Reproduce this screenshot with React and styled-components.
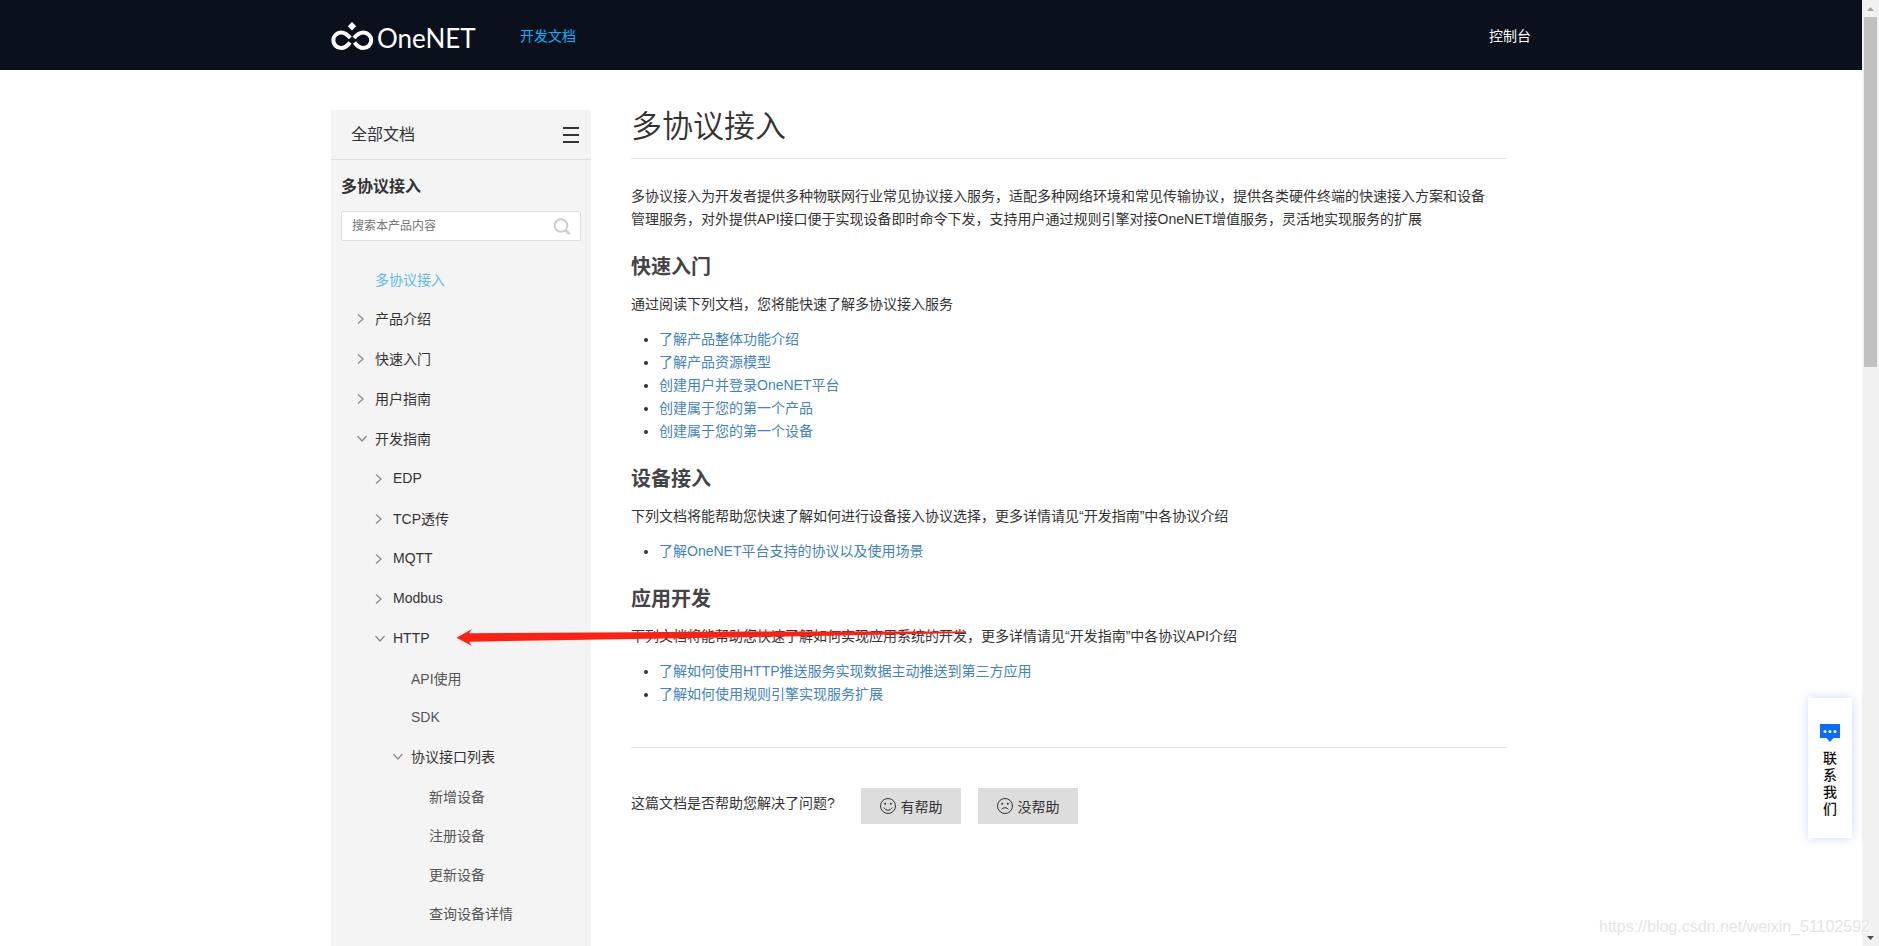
import React, { useState } from 'react';
import styled, { createGlobalStyle } from 'styled-components';

const GlobalStyle = createGlobalStyle`
  * {
    box-sizing: border-box;
  }
  body {
    margin: 0;
    background: #fff;
    color: #333;
    font-family: "Liberation Sans", "Noto Sans CJK SC", sans-serif;
    font-size: 14px;
  }
  a {
    text-decoration: none;
  }
  button, input {
    font-family: inherit;
  }
`;

const Page = styled.div`
  display: flex;
  position: relative;
  height: 100vh;
  overflow: hidden;
`;

const Main = styled.div`
  flex: 1;
  min-width: 0;
  overflow: hidden;
`;

const Container = styled.div`
  position: relative;
  display: flex;
  width: 100%;
  max-width: 1200px;
  margin: 0 auto;
`;

/* header */
const Header = styled.header`
  background: #0a111c;
`;

const HeaderInner = styled(Container)`
  align-items: center;
  height: 70px;
  padding-top: 2px;
`;

const Logo = styled.a`
  display: flex;
  align-items: center;
  gap: 3px;
  width: 189px;
  color: #fff;
`;

const LogoText = styled.span`
  padding-top: 4px;
  font-family: Lato, sans-serif;
  font-size: 26px;
  line-height: 32px;
`;

const NavLink = styled.a`
  color: ${(props) => (props.$active ? '#00b4ff' : '#fff')};
  line-height: 20px;
  margin-left: ${(props) => (props.$end ? 'auto' : '0')};
`;

/* sidebar */
const Body = styled(Container)`
  padding-top: 40px;
  gap: 40px;
  align-items: flex-start;
`;

const Sidebar = styled.aside`
  flex: 0 0 260px;
  min-height: 100vh;
  background: #f4f4f4;
`;

const SidebarTop = styled.div`
  display: flex;
  align-items: center;
  justify-content: space-between;
  height: 50px;
  padding: 0 12px 0 20px;
  border-bottom: 1px solid #ddd;
  font-size: 16px;
  line-height: 24px;
`;

const AllDocs = styled.a`
  color: #333;
`;

const MenuButton = styled.button`
  display: flex;
  flex-direction: column;
  gap: 5px;
  padding: 0;
  border: none;
  background: none;
  cursor: pointer;

  span {
    width: 16px;
    height: 2px;
    background: #333;
  }
`;

const SidebarTitle = styled.h2`
  margin: 15px 10px 12px;
  font-size: 16px;
  line-height: 24px;
`;

const SearchBox = styled.label`
  display: flex;
  align-items: center;
  height: 30px;
  margin: 0 10px 18px;
  padding: 0 10px;
  border: 1px solid #ddd;
  border-radius: 2px;
  background: #fff;

  input {
    flex: 1;
    min-width: 0;
    padding: 0;
    border: none;
    outline: none;
    font-size: 12px;
    color: #333;
  }
  input::placeholder {
    color: #757575;
  }
`;

const Tree = styled.ul`
  margin: 0;
  padding: 0;
  list-style: none;
`;

const TreeLink = styled.a`
  display: flex;
  align-items: center;
  height: ${(props) => (props.$parent ? 40 : 39)}px;
  padding-left: ${(props) => 26 + props.$level * 18}px;
  color: ${(props) => (props.$active ? '#5cb8ff' : props.$parent ? '#333' : '#555')};
`;

const Toggle = styled.span`
  display: flex;
  width: 18px;
  padding-top: 2px;
`;

/* article */
const Article = styled.article`
  flex: 1;
  min-width: 0;
  max-width: 875px;
`;

const Title = styled.h1`
  margin: 0 0 26px;
  padding-bottom: 14px;
  border-bottom: 1px solid #e5e5e5;
  font-size: 31px;
  font-weight: 350;
  line-height: 34px;
`;

const Heading = styled.h3`
  margin: 22px 0 12px;
  color: #444;
  font-size: 20px;
  line-height: 28px;
`;

const Paragraph = styled.p`
  margin: 0;
  line-height: 23px;
`;

const LinkList = styled.ul`
  margin: 12px 0 22px;
  padding-left: 28px;
  line-height: 23px;

  a {
    color: #4183c4;
  }
`;

const Feedback = styled.div`
  display: flex;
  align-items: flex-start;
  gap: 17px;
  margin-top: 41px;
  padding-top: 40px;
  border-top: 1px solid #e5e5e5;
`;

const Question = styled.span`
  width: 213px;
  line-height: 30px;
`;

const FeedbackButton = styled.button`
  display: flex;
  align-items: center;
  justify-content: center;
  gap: 5px;
  width: 100px;
  height: 36px;
  padding: 0;
  border: none;
  background: #ddd;
  color: #333;
  font-size: 14px;
  cursor: pointer;
`;

/* things floating over the page */
const Arrow = styled.svg`
  position: absolute;
  top: 559px;
  left: 125px;
`;

const Contact = styled.button`
  position: absolute;
  right: 27px;
  bottom: 108px;
  display: flex;
  flex-direction: column;
  align-items: center;
  gap: 8px;
  width: 44px;
  height: 140px;
  padding: 26px 15px 0;
  border: none;
  background: #fff;
  box-shadow: 0 0 10px rgba(60, 100, 200, 0.25);
  color: #111;
  font-size: 14px;
  font-weight: 500;
  line-height: 17px;
  cursor: pointer;
`;

const Watermark = styled.span`
  position: absolute;
  right: 9px;
  bottom: 9px;
  color: #e4e4e4;
  font-size: 16px;
  line-height: 20px;
  text-shadow: 1px 1px 0 #fff;
`;

const Scrollbar = styled.div`
  display: flex;
  flex-direction: column;
  align-items: center;
  justify-content: space-between;
  width: 17px;
  background: #f1f1f1;
`;

const ScrollThumb = styled.div`
  width: 13px;
  height: 37%;
  margin-bottom: auto;
  background: #c1c1c1;
`;

const ScrollButton = styled.button`
  display: flex;
  align-items: center;
  justify-content: center;
  width: 17px;
  height: 17px;
  padding: 0;
  border: none;
  background: none;
`;

const menu = [
  { text: '多协议接入', level: 1, active: true },
  { text: '产品介绍', level: 1, parent: true },
  { text: '快速入门', level: 1, parent: true },
  { text: '用户指南', level: 1, parent: true },
  { text: '开发指南', level: 1, parent: true, open: true },
  { text: 'EDP', level: 2, parent: true },
  { text: 'TCP透传', level: 2, parent: true },
  { text: 'MQTT', level: 2, parent: true },
  { text: 'Modbus', level: 2, parent: true },
  { text: 'HTTP', level: 2, parent: true, open: true },
  { text: 'API使用', level: 3 },
  { text: 'SDK', level: 3 },
  { text: '协议接口列表', level: 3, parent: true, open: true },
  { text: '新增设备', level: 4 },
  { text: '注册设备', level: 4 },
  { text: '更新设备', level: 4 },
  { text: '查询设备详情', level: 4 },
];

const sections = [
  {
    title: '快速入门',
    text: '通过阅读下列文档，您将能快速了解多协议接入服务',
    links: [
      '了解产品整体功能介绍',
      '了解产品资源模型',
      '创建用户并登录OneNET平台',
      '创建属于您的第一个产品',
      '创建属于您的第一个设备',
    ],
  },
  {
    title: '设备接入',
    text: '下列文档将能帮助您快速了解如何进行设备接入协议选择，更多详情请见“开发指南”中各协议介绍',
    links: ['了解OneNET平台支持的协议以及使用场景'],
  },
  {
    title: '应用开发',
    text: '下列文档将能帮助您快速了解如何实现应用系统的开发，更多详情请见“开发指南”中各协议API介绍',
    links: ['了解如何使用HTTP推送服务实现数据主动推送到第三方应用', '了解如何使用规则引擎实现服务扩展'],
  },
];

const LogoMark = () => (
  <svg width="43" height="28" viewBox="0 0 43 28" fill="none" stroke="#fff" strokeWidth="4">
    <path d="M19.300 16C16 12 13.500 10.600 10 10.600a7.700 7.700 0 0 0 0 15.400c3.500 0 6-1.500 9-5.500" />
    <path d="M23 16C26.300 12 29 10.600 32.500 10.600a7.700 7.700 0 0 1 0 15.400c-3.500 0-6-1.500-9-5.500" />
    <path d="M21 0l4.200 4.200L21 8.400l-4.200-4.200z" fill="#fff" stroke="none" />
  </svg>
);

const Chevron = ({ open }) => (
  <svg width="10" height="10" viewBox="0 0 10 10" fill="none" stroke="#888" strokeWidth="1.2">
    <path d={open ? 'M0.500 2l4.500 5 4.500-5' : 'M1 0.500l5 4.500-5 4.500'} />
  </svg>
);

const Face = ({ sad }) => (
  <svg width="16" height="16" viewBox="0 0 16 16" fill="none" stroke="#333">
    <circle cx="8" cy="8" r="7.500" />
    <path d={sad ? 'M4.500 11.500c1.500-2.300 5.500-2.300 7 0' : 'M4 9.500c1.300 3.600 6.700 3.600 8 0'} />
    <circle cx="5.200" cy="5.800" r="1" fill="#333" stroke="none" />
    <circle cx="10.800" cy="5.800" r="1" fill="#333" stroke="none" />
  </svg>
);

const App = () => {
  const [keyword, setKeyword] = useState('');

  return (
    <Page>
      <GlobalStyle />
      <Main>
        <Header>
          <HeaderInner>
            <Logo href="#">
              <LogoMark />
              <LogoText>OneNET</LogoText>
            </Logo>
            <NavLink href="#" $active>开发文档</NavLink>
            <NavLink href="#" $end>控制台</NavLink>
          </HeaderInner>
        </Header>
        <Body>
          <Sidebar>
            <SidebarTop>
              <AllDocs href="#">全部文档</AllDocs>
              <MenuButton aria-label="菜单">
                <span />
                <span />
                <span />
              </MenuButton>
            </SidebarTop>
            <SidebarTitle>多协议接入</SidebarTitle>
            <SearchBox>
              <input
                aria-label="搜索"
                placeholder="搜索本产品内容"
                value={keyword}
                onChange={(e) => setKeyword(e.target.value)}
              />
              <svg width="17" height="17" viewBox="0 0 17 17" fill="none" stroke="#ccc" strokeWidth="2">
                <circle cx="8" cy="7.500" r="6.300" />
                <path d="M12.500 12l4 4" strokeWidth="2.500" />
              </svg>
            </SearchBox>
            <Tree>
              {menu.map((item) => (
                <li key={item.text + item.level}>
                  <TreeLink href="#" $level={item.level - 1} $parent={item.parent} $active={item.active}>
                    <Toggle>{item.parent && <Chevron open={item.open} />}</Toggle>
                    {item.text}
                  </TreeLink>
                </li>
              ))}
            </Tree>
          </Sidebar>
          <Article>
            <Title>多协议接入</Title>
            <Paragraph>
              多协议接入为开发者提供多种物联网行业常见协议接入服务，适配多种网络环境和常见传输协议，提供各类硬件终端的快速接入方案和设备
              <br />
              管理服务，对外提供API接口便于实现设备即时命令下发，支持用户通过规则引擎对接OneNET增值服务，灵活地实现服务的扩展
            </Paragraph>
            {sections.map((section) => (
              <section key={section.title}>
                <Heading>{section.title}</Heading>
                <Paragraph>{section.text}</Paragraph>
                <LinkList>
                  {section.links.map((link) => (
                    <li key={link}><a href="#">{link}</a></li>
                  ))}
                </LinkList>
              </section>
            ))}
            <Feedback>
              <Question>这篇文档是否帮助您解决了问题?</Question>
              <FeedbackButton><Face />有帮助</FeedbackButton>
              <FeedbackButton><Face sad />没帮助</FeedbackButton>
            </Feedback>
          </Article>
          <Arrow width="512" height="18" viewBox="0 0 512 18" fill="#ff2012">
            <path d="M0.500 8.700L16 0l-3 4.300L300 2.500 510 2.500v1.500L300 8 13 12.700l3 4.300z" />
          </Arrow>
        </Body>
      </Main>
      <Scrollbar>
        <ScrollButton aria-label="向上">
          <svg width="7" height="4" viewBox="0 0 7 4"><path d="M0 4L3.500 0 7 4z" fill="#a3a3a3" /></svg>
        </ScrollButton>
        <ScrollThumb />
        <ScrollButton aria-label="向下">
          <svg width="7" height="4" viewBox="0 0 7 4"><path d="M0 0h7L3.500 4z" fill="#505050" /></svg>
        </ScrollButton>
      </Scrollbar>
      <Contact>
        <svg width="20" height="18" viewBox="0 0 20 18">
          <path d="M0 0h20v14h-6.500L10 18l-3.500-4H0z" fill="#0a6cff" />
          <circle cx="5" cy="7.500" r="1.500" fill="#fff" />
          <circle cx="10" cy="7.500" r="1.500" fill="#fff" />
          <circle cx="15" cy="7.500" r="1.500" fill="#fff" />
        </svg>
        联系我们
      </Contact>
      <Watermark>https://blog.csdn.net/weixin_51102592</Watermark>
    </Page>
  );
};

export default App;
